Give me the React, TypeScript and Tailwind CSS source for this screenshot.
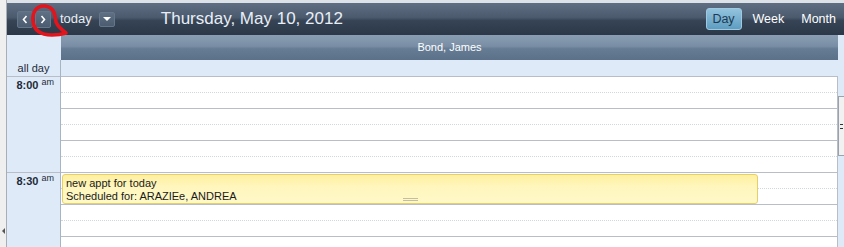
import React from "react"

const slots = Array.from({ length: 12 }, (_, i) => i)

function NavButton({ dir }: { dir: "prev" | "next" }) {
    return (
        <div className="w-[16px] h-[17px] flex items-center justify-center rounded-[2px] border border-[#66768a] bg-[linear-gradient(to_bottom,#5f6f84,#4b5b70)]">
            <svg width="6" height="9" viewBox="0 0 6 9">
                <path
                    d={dir === "prev" ? "M4.5 1 L1.5 4.5 L4.5 8" : "M1.5 1 L4.5 4.5 L1.5 8"}
                    stroke="#ffffff"
                    strokeWidth="1.6"
                    fill="none"
                />
            </svg>
        </div>
    )
}

function TimeLabel({ time }: { time: string }) {
    return (
        <div className="flex justify-end items-start pr-[6px] pt-[2px] text-[11px] leading-[12px] text-[#1e2a38]">
            <span className="font-bold">{time}</span>
            <span className="ml-[3px] text-[9px] leading-[9px] -mt-[1px]">am</span>
        </div>
    )
}

export default function App() {
    return (
        <div className="w-[844px] h-[247px] flex overflow-hidden bg-[#dfeaf8] font-['Liberation_Sans',Arial,sans-serif]">
            {/* left splitter strip */}
            <div className="relative w-[7px] h-full shrink-0 bg-[#efefef] border-r border-[#a9aeb5]">
                <div className="absolute left-[2px] top-[228px] w-0 h-0 border-y-[3px] border-y-transparent border-r-[3px] border-r-[#555]" />
            </div>

            <div className="flex-1 flex flex-col min-h-0">
                {/* toolbar */}
                <div className="relative shrink-0 h-[35px] border-t-[3px] border-[#dde2e8] bg-[linear-gradient(to_bottom,#5f6e82_0%,#4b5a6d_45%,#364456_55%,#2c3847_100%)] flex items-center pl-[10px] pr-[8px]">
                    <div className="flex gap-[2px]">
                        <NavButton dir="prev" />
                        <NavButton dir="next" />
                    </div>
                    <span className="ml-[9px] text-[13px] text-[#e9eef4]">today</span>
                    <div className="ml-[7px] w-[16px] h-[15px] flex items-center justify-center rounded-[2px] border border-[#66768a] bg-[linear-gradient(to_bottom,#5f6f84,#4b5b70)]">
                        <div className="w-0 h-0 border-x-[4px] border-x-transparent border-t-[4px] border-t-white" />
                    </div>
                    <span className="ml-[46px] text-[17px] text-[#e8eef6]">Thursday, May 10, 2012</span>

                    <div className="ml-auto flex items-center text-[12.5px]">
                        <div className="h-[22px] w-[36px] flex items-center justify-center rounded-[3px] border border-[#9fc9e0] bg-[linear-gradient(to_bottom,#93c3dd,#5e9dc1)] text-[#1c3a52]">
                            Day
                        </div>
                        <span className="ml-[11px] text-white">Week</span>
                        <span className="ml-[17px] text-white">Month</span>
                    </div>

                    {/* hand-drawn annotation */}
                    <svg className="absolute left-[-7px] top-[-3px]" width="72" height="40" viewBox="0 0 72 40">
                        <path
                            d="M45 6 C37 5 32 12 33 21 C34 31 41 35 52 35 C58 35 63 34 66 33 C62 30 58 27 56 22 C55 14 54 7 45 6 Z"
                            stroke="#e3141c"
                            strokeWidth="3.5"
                            fill="none"
                            strokeLinecap="round"
                            strokeLinejoin="round"
                        />
                    </svg>
                </div>

                {/* resource header */}
                <div className="flex shrink-0 h-[25px]">
                    <div className="w-[54px]" />
                    <div className="w-[777px] flex items-center justify-center text-[11px] text-white bg-[linear-gradient(to_bottom,#8a9db2_0%,#798ea5_45%,#667c94_55%,#5b7189_100%)]">
                        Bond, James
                    </div>
                </div>

                {/* all day row */}
                <div className="flex shrink-0 h-[16px]">
                    <div className="w-[54px] border-r border-[#a7b4c4] flex items-center justify-center text-[11px] text-[#1e2a38]">
                        all day
                    </div>
                </div>

                {/* time grid */}
                <div className="flex flex-1 min-h-0 overflow-hidden">
                    <div className="w-[54px] shrink-0 flex flex-col border-r border-[#a7b4c4]">
                        {slots.map(i => (
                            <div
                                key={i}
                                className={
                                    i % 6 === 0
                                        ? "h-[16px] shrink-0 border-t border-[#b7bec8]"
                                        : "h-[16px] shrink-0"
                                }
                            >
                                {i === 0 && <TimeLabel time="8:00" />}
                                {i === 6 && <TimeLabel time="8:30" />}
                            </div>
                        ))}
                    </div>

                    <div className="relative w-[777px] shrink-0 bg-white border-r border-[#b7bec8] flex flex-col">
                        {slots.map(i => (
                            <div
                                key={i}
                                className={
                                    i % 2 === 0
                                        ? "h-[16px] shrink-0 border-t border-[#b7bec8]"
                                        : "h-[16px] shrink-0 border-t border-dotted border-[#d3d8de]"
                                }
                            />
                        ))}

                        <div className="absolute left-[1px] top-[98px] w-[696px] h-[30px] rounded-[3px] border border-[#e6cf6a] bg-[linear-gradient(to_bottom,#ffef9e,#fff6bd_40%,#fff8c8)] px-[3px] pt-[2px] text-[11px] leading-[13px] text-[#1a1a1a]">
                            <div>new appt for today</div>
                            <div>Scheduled for: ARAZIEe, ANDREA</div>
                            <div className="absolute left-[340px] bottom-[2px] w-[15px] h-[3px] border-y border-[#c4bda0]" />
                        </div>
                    </div>

                    {/* right splitter */}
                    <div className="flex-1 pt-[20px]">
                        <div className="h-[60px] border border-r-0 border-[#9aa3ad] bg-[#f1f1f1] flex items-center pl-[1px]">
                            <div className="w-[3px] h-[5px] border-y border-[#333]" />
                        </div>
                    </div>
                </div>
            </div>
        </div>
    )
}
